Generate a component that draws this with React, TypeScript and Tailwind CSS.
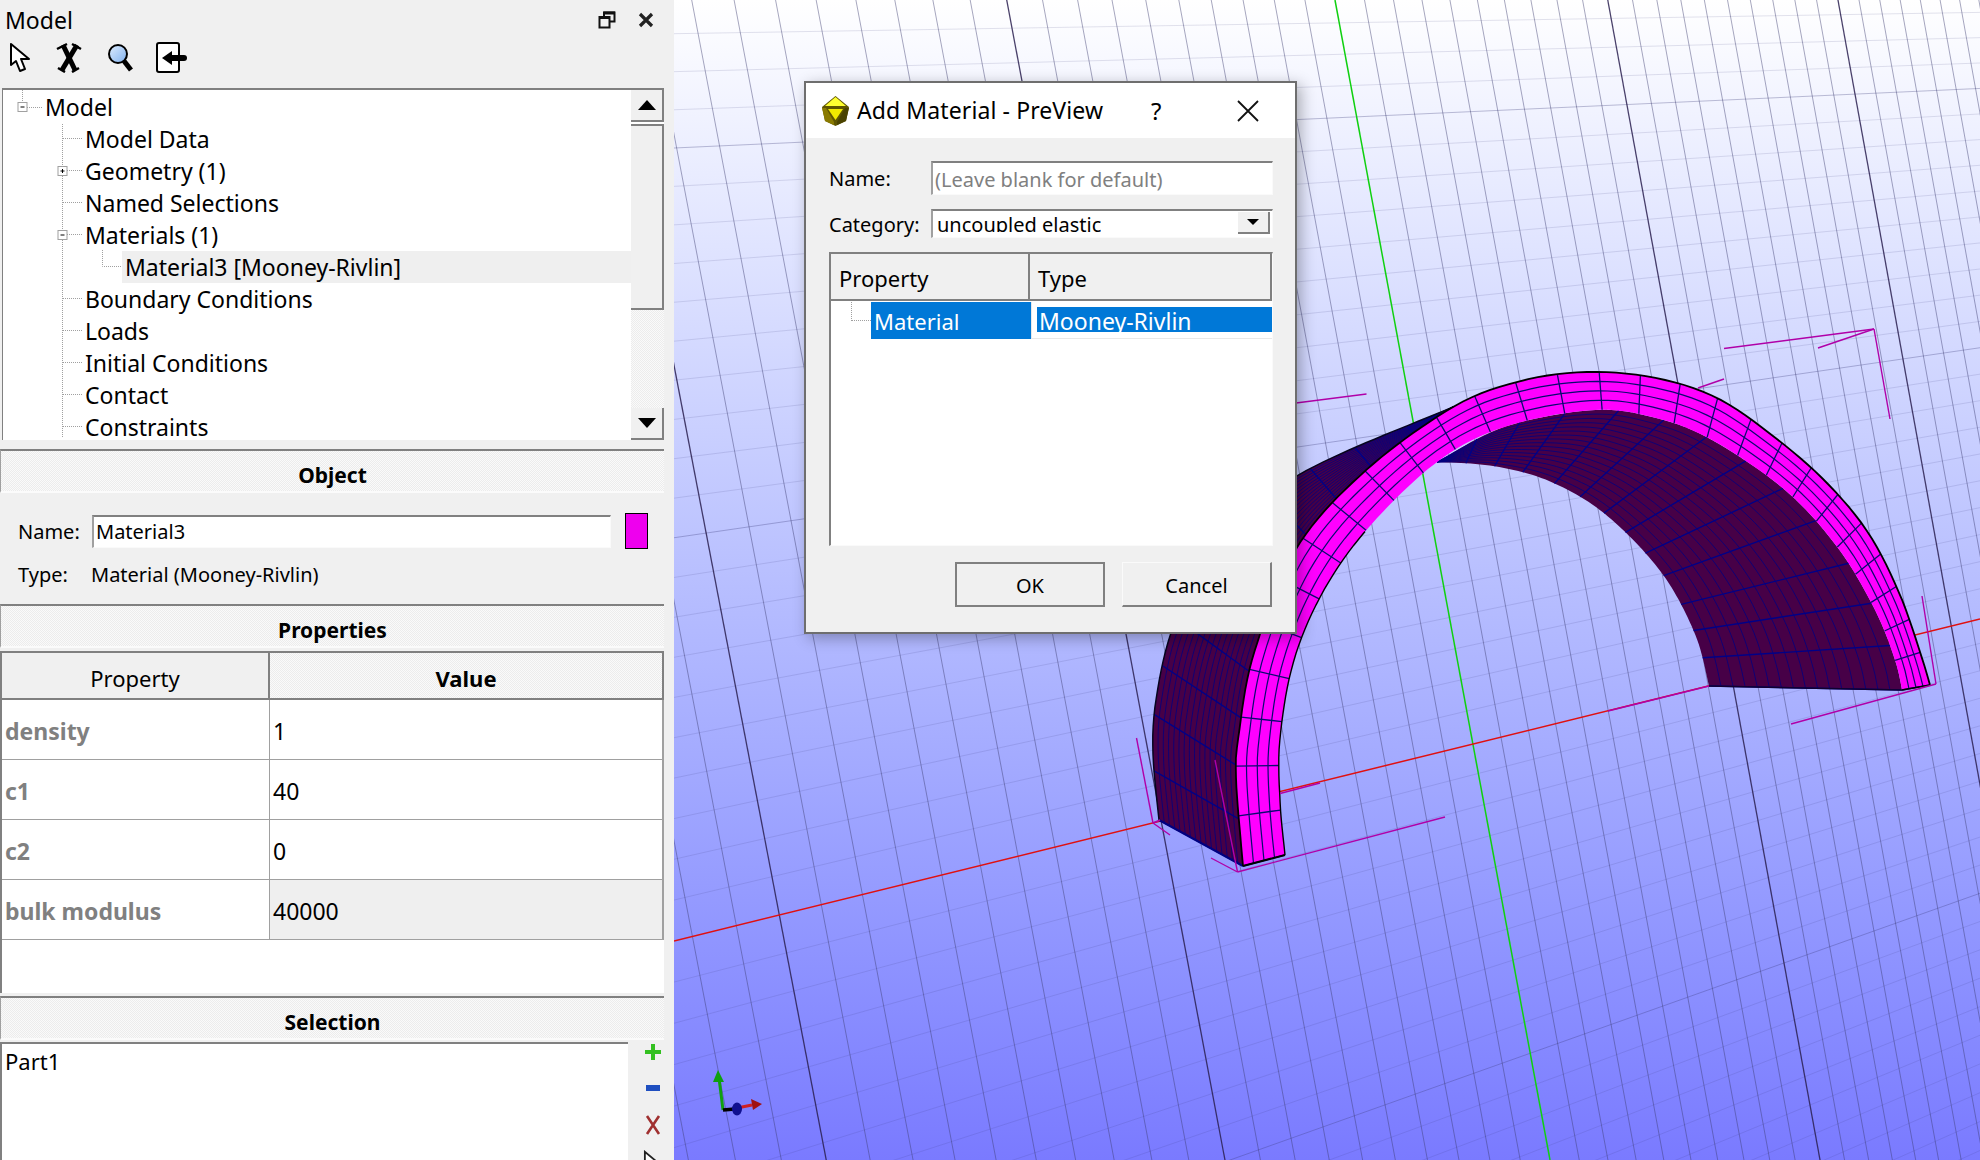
import React from "react";

type P = [number, number];

function resample(pts: P[], n: number, warp = 0): P[] {
  const dense: P[] = [];
  const g = (i: number) => pts[Math.max(0, Math.min(pts.length - 1, i))];
  for (let i = 0; i < pts.length - 1; i++) {
    const [p0, p1, p2, p3] = [g(i - 1), g(i), g(i + 1), g(i + 2)];
    for (let k = 0; k < 20; k++) {
      const t = k / 20, t2 = t * t, t3 = t2 * t;
      const f = (a: number, b: number, c: number, d: number) =>
        0.5 * (2 * b + (c - a) * t + (2 * a - 5 * b + 4 * c - d) * t2 + (3 * b - a - 3 * c + d) * t3);
      dense.push([f(p0[0], p1[0], p2[0], p3[0]), f(p0[1], p1[1], p2[1], p3[1])]);
    }
  }
  dense.push(pts[pts.length - 1]);
  const L = [0];
  for (let i = 1; i < dense.length; i++) L.push(L[i - 1] + Math.hypot(dense[i][0] - dense[i - 1][0], dense[i][1] - dense[i - 1][1]));
  const out: P[] = [];
  let j = 0;
  for (let i = 0; i <= n; i++) {
    const t = i / n;
    const s = ((1 + warp) * t - warp * t * t) * L[L.length - 1];
    while (j < L.length - 2 && L[j + 1] < s) j++;
    const r = (s - L[j]) / Math.max(1e-6, L[j + 1] - L[j]);
    out.push([dense[j][0] + (dense[j + 1][0] - dense[j][0]) * r, dense[j][1] + (dense[j + 1][1] - dense[j][1]) * r]);
  }
  return out;
}
const lerp = (a: P, b: P, t: number): P => [a[0] + (b[0] - a[0]) * t, a[1] + (b[1] - a[1]) * t];
const pth = (p: P[], close = false) => "M" + p.map((q) => q[0].toFixed(1) + " " + q[1].toFixed(1)).join("L") + (close ? "Z" : "");

const outerPts: P[] = [[1243, 866], [1236, 778], [1239, 733], [1254, 653], [1296, 549], [1364, 472], [1453, 407], [1521, 381], [1588, 372], [1656, 378], [1717, 398], [1773, 436], [1826, 482], [1869, 534], [1900, 595], [1921, 655], [1930, 685]];
const innerPts: P[] = [[1285, 855], [1280, 801], [1280, 738], [1294, 660], [1324, 590], [1369, 527], [1437, 462], [1504, 427], [1594, 410], [1656, 418], [1712, 440], [1785, 490], [1838, 548], [1875, 610], [1895, 660], [1902, 690]];
const innerBack: P[] = [[1437, 462], [1493, 466], [1549, 481], [1605, 514], [1661, 572], [1695, 634], [1709, 686]];
const outerBack: P[] = [[1159, 820], [1153, 753], [1156, 700], [1172, 630], [1205, 565], [1290, 480], [1453, 407]];

function Scene() {
  const steep: React.ReactNode[] = [];
  for (let u = -26; u <= 30; u++) {
    const d = (29.5 * u) / (1 + 0.00924 * u);
    const major = u % 10 === 0;
    if (u === 0) continue;
    steep.push(
      <line key={u} x1={1335 + d * 1.01} y1={0} x2={1550 + d} y2={1160} stroke={major ? "#2a2050" : "#3c3c6e"} strokeOpacity={major ? 0.85 : 0.45} strokeWidth={major ? 1.3 : 1} />
    );
  }
  const shallow: React.ReactNode[] = [];
  const VP: P = [4576, -30];
  for (let v = -24; v <= 22; v++) {
    if (v === 0) continue;
    const yL = 941 + 41 * v + 0.0675 * v * v;
    const k = (4576 - 1980) / (4576 - 674);
    const yR = VP[1] + (yL - VP[1]) * k;
    const major = v % 10 === 0;
    shallow.push(<line key={v} x1={674} y1={yL} x2={1980} y2={yR} stroke="#3c3c78" strokeOpacity={major ? 0.32 : 0.14} strokeWidth={1} />);
  }

  const N = 28;
  const O = resample(outerPts, N, 0.2);
  const I = resample(innerPts, N, 0.2);
  const ringFine = [...resample(outerPts, 120), ...resample(innerPts, 120).reverse()];
  const ringMesh: React.ReactNode[] = [];
  for (let i = 0; i <= N; i++) ringMesh.push(<line key={"r" + i} x1={O[i][0]} y1={O[i][1]} x2={I[i][0]} y2={I[i][1]} stroke="#0a0a70" strokeWidth={1.3} />);
  const of = resample(outerPts, 120);
  const inf = resample(innerPts, 120);
  [0.25, 0.5, 0.75].forEach((t, j) =>
    ringMesh.push(<path key={"c" + j} d={pth(of.map((p, i) => lerp(p, inf[i], t)))} fill="none" stroke="#0a0a70" strokeWidth={1.2} />)
  );

  const surf = (front: P[], back: P[], cross: number, longs: number, key: string) => {
    const f = resample(front, 80), b = resample(back, 80);
    const out: React.ReactNode[] = [<path key={key + "f"} d={pth([...f, ...[...b].reverse()], true)} fill="#470047" />];
    for (let i = 1; i < longs; i++) {
      out.push(<path key={key + "l" + i} d={pth(f.map((p, q) => lerp(p, b[q], i / longs)))} fill="none" stroke="#000080" strokeWidth={0.8} />);
    }
    for (let i = 0; i <= cross; i++) {
      const q = Math.round((i / cross) * 80);
      out.push(<line key={key + "x" + i} x1={f[q][0]} y1={f[q][1]} x2={b[q][0]} y2={b[q][1]} stroke="#000088" strokeWidth={1.4} />);
    }
    return out;
  };

  const leftFront = [...outerPts.slice(0, 7)];
  const rightFront = [...innerPts.slice(6)];
  const bbox: [number, number, number, number][] = [
    [1237.5, 872, 1445, 817], [1237.5, 872, 1211, 858], [1237.5, 872, 1215, 760],
    [1153, 823, 1136.5, 738], [1153, 823, 1170, 835], [1153, 823, 1160, 820],
    [1936, 684, 1791, 724], [1936, 684, 1922, 596], [1608, 711, 1709, 686], [1280, 793.5, 1320, 783],
    [1874, 329, 1724, 348.5], [1874, 329, 1818, 348], [1874, 329, 1890, 419], [1698, 388, 1724, 379], [1296, 403, 1366.5, 394],
  ];

  return (
    <svg className="absolute inset-0 h-full w-full" viewBox="674 0 1306 1160">
      {shallow}
      {steep}
      <line x1={1335} y1={0} x2={1550} y2={1160} stroke="#10d010" strokeWidth={1.5} />
      <line x1={674} y1={941} x2={1980} y2={619} stroke="#e01010" strokeWidth={1.5} />
      {surf(leftFront, outerBack, 11, 16, "a")}
      <path d={pth(resample(outerBack, 60))} fill="none" stroke="#050520" strokeWidth={1.5} />
      <line x1={1159} y1={820} x2={1243} y2={866} stroke="#000080" strokeWidth={2} />
      {surf(rightFront, innerBack, 13, 16, "b")}
      <line x1={1709} y1={686} x2={1902} y2={690} stroke="#100030" strokeWidth={1.5} />
      <path d={pth(ringFine, true)} fill="#ff00ff" />
      {ringMesh}
      <path d={pth(of)} fill="none" stroke="#000" strokeWidth={1.8} />
      <path d={pth(inf.slice(0, 40))} fill="none" stroke="#000" strokeWidth={1.4} />
      <line x1={1243} y1={866} x2={1285} y2={855} stroke="#000" strokeWidth={2} />
      <line x1={1902} y1={690} x2={1930} y2={685} stroke="#000" strokeWidth={1.5} />
      {bbox.map((b, i) => (
        <line key={i} x1={b[0]} y1={b[1]} x2={b[2]} y2={b[3]} stroke="#b000a8" strokeWidth={1.4} />
      ))}
      <line x1={723} y1={1110} x2={719} y2={1078} stroke="#10a010" strokeWidth={3} />
      <polygon points="718,1070 713,1082 724,1082" fill="#10a010" />
      <line x1={737} y1={1108} x2={752} y2={1105} stroke="#d02020" strokeWidth={3} />
      <polygon points="762,1104 751,1099 753,1110" fill="#a01010" />
      <line x1={723} y1={1110} x2={735} y2={1109} stroke="#000" strokeWidth={3.5} />
      <ellipse cx={737} cy={1109} rx={5} ry={6.5} fill="#101090" />
    </svg>
  );
}

const Cursor = ({ w = 22, h = 31 }: { w?: number; h?: number }) => (
  <svg width={w} height={h} viewBox="0 0 22 31">
    <path d="M2 2 L2 23 L7 19 L11 29 L16 27 L12 17 L20 17 Z" fill="#fff" stroke="#000" strokeWidth="2" strokeLinejoin="round" />
  </svg>
);

const ModelToolbar = () => (
  <div className="flex h-[48px] items-start pl-[9px] pt-[2px]">
    <Cursor />
    <svg className="ml-[25px]" width="26" height="31" viewBox="0 0 26 31">
      <path d="M7 3 L19 28" fill="none" stroke="#000" strokeWidth="5" />
      <path d="M21 3 L6 28" fill="none" stroke="#000" strokeWidth="5" />
      <path d="M1 7 L11 2 M16 2 L25 7 M2 26 L9 30 M16 30 L23 26" stroke="#000" strokeWidth="2.5" />
    </svg>
    <svg className="ml-[25px]" width="26" height="31" viewBox="0 0 26 31">
      <defs>
        <linearGradient id="mag" x1="0" y1="0" x2="1" y2="1">
          <stop offset="0" stopColor="#e0eeff" />
          <stop offset="1" stopColor="#7fb0ee" />
        </linearGradient>
      </defs>
      <circle cx="11" cy="12" r="9" fill="url(#mag)" stroke="#000" strokeWidth="2" />
      <line x1="17" y1="19" x2="24" y2="28" stroke="#000" strokeWidth="5" />
    </svg>
    <svg className="ml-[23px]" width="32" height="31" viewBox="0 0 32 31">
      <rect x="1" y="1" width="22" height="29" rx="2" fill="#fff" stroke="#000" strokeWidth="2" />
      <line x1="14" y1="16" x2="28" y2="16" stroke="#000" strokeWidth="6" strokeLinecap="round" />
      <polygon points="6,16 16,9 16,23" fill="#000" />
    </svg>
  </div>
);

const treeRows: { label: string; level: number; selected?: boolean }[] = [
  { label: "Model", level: 0 },
  { label: "Model Data", level: 1 },
  { label: "Geometry (1)", level: 1 },
  { label: "Named Selections", level: 1 },
  { label: "Materials (1)", level: 1 },
  { label: "Material3 [Mooney-Rivlin]", level: 2, selected: true },
  { label: "Boundary Conditions", level: 1 },
  { label: "Loads", level: 1 },
  { label: "Initial Conditions", level: 1 },
  { label: "Contact", level: 1 },
  { label: "Constraints", level: 1 },
];

const TreeLines = () => {
  const box = (x: number, y: number, plus: boolean) => (
    <g key={x + "-" + y}>
      <rect x={x - 4.5} y={y - 4.5} width="9" height="9" fill="#fff" stroke="#a0a0a0" />
      <line x1={x - 2} y1={y} x2={x + 2} y2={y} stroke="#000" />
      {plus && <line x1={x} y1={y - 2} x2={x} y2={y + 2} stroke="#000" />}
    </g>
  );
  const ys = [139, 171, 203, 235, 299, 331, 363, 395, 427];
  return (
    <svg className="absolute left-0 top-0 z-10" width="130" height="350" viewBox="3 90 130 350">
      <g stroke="#a0a0a0" strokeDasharray="1 1" fill="none">
        <path d="M22.5 90 V103 M27 107.5 H42 M62.5 124 V438" />
        {ys.map((y) => (
          <path key={y} d={`M63 ${y - 0.5} H82`} />
        ))}
        <path d="M102.5 250 V266.5 H122" />
      </g>
      {box(22.5, 107, false)}
      {box(62.5, 171, true)}
      {box(62.5, 235, false)}
    </svg>
  );
};

const dither = "bg-[repeating-conic-gradient(#ececec_0_25%,#fafafa_0_50%)] bg-[length:2px_2px]";

const SectionHeader = ({ title }: { title: string }) => (
  <div className={`flex h-[44px] shrink-0 items-center justify-center border-b-2 border-l border-t-2 border-b-[#fbfbfb] border-l-[#a0a0a0] border-t-[#808080] pt-[9px] ${dither} text-[21px] font-bold`}>{title}</div>
);

const ScrollBtn = ({ up }: { up?: boolean }) => (
  <div className="flex h-[32px] items-center justify-center border-b-2 border-r-2 border-[#808080] bg-[#f0f0f0]">
    <svg width="18" height="10" viewBox="0 0 18 10">
      <polygon points={up ? "0,10 18,10 9,0" : "0,0 18,0 9,10"} fill="#000" />
    </svg>
  </div>
);

const props = [
  { k: "density", v: "1" },
  { k: "c1", v: "40" },
  { k: "c2", v: "0" },
  { k: "bulk modulus", v: "40000", sel: true },
];

function LeftPanel() {
  return (
    <div className="flex h-[1160px] w-[674px] shrink-0 flex-col overflow-hidden bg-[#f0f0f0] pr-[10px] text-[22px] text-black">
      <div className="flex h-[40px] shrink-0 items-center justify-between pl-[5px] pr-[10px] text-[23px]">
        <span>Model</span>
        <div className="flex items-center gap-[22px]">
          <svg width="18" height="18" viewBox="0 0 18 18">
            <rect x="6" y="1.5" width="10.5" height="9" fill="none" stroke="#111" strokeWidth="2" />
            <rect x="1.5" y="6" width="10" height="10.5" fill="#f0f0f0" stroke="#111" strokeWidth="2" />
            <rect x="1" y="5" width="11" height="3" fill="#111" />
            <rect x="5.5" y="0.5" width="11.5" height="3" fill="#111" />
          </svg>
          <svg width="16" height="16" viewBox="0 0 16 16">
            <path d="M2 2 L14 14 M14 2 L2 14" stroke="#222" strokeWidth="3.2" />
          </svg>
        </div>
      </div>
      <ModelToolbar />
      <div className="relative ml-[2px] flex h-[352px] shrink-0 border-l border-t-2 border-l-[#808080] border-t-[#808080] bg-white">
        <TreeLines />
        <div className="flex-1 overflow-hidden pt-px text-[23px] leading-[26px]">
          {treeRows.map((r) => (
            <div key={r.label} className={`relative flex h-[32px] items-center ${r.level === 0 ? "pl-[42px]" : r.level === 1 ? "pl-[82px]" : "pl-[122px]"}`}>
              {r.selected && <span className="absolute inset-y-0 left-[119px] right-0 bg-[#efefef]" />}
              <span className="relative">{r.label}</span>
            </div>
          ))}
        </div>
        <div className="flex w-[33px] shrink-0 flex-col">
          <ScrollBtn up />
          <div className="mt-[2px] h-[186px] border-b-2 border-r-2 border-t-2 border-[#808080] bg-[#f0f0f0]" />
          <div className={`flex-1 ${dither}`} />
          <ScrollBtn />
        </div>
      </div>
      <div className="h-[9px] shrink-0" />
      <SectionHeader title="Object" />
      <div className="flex h-[111px] shrink-0 flex-col pl-[18px] pr-[16px] pt-[20px] text-[20px]">
        <div className="flex h-[36px] items-center">
          <span className="w-[74px] pt-px">Name:</span>
          <div className="flex h-[33px] w-[519px] items-center border-b border-l-2 border-r border-t-2 border-b-[#fafafa] border-l-[#a0a0a0] border-r-[#fafafa] border-t-[#808080] bg-white pl-[2px] pt-px">Material3</div>
          <div className="ml-[14px] h-[36px] w-[23px] border border-black bg-[#ee00ee]" />
        </div>
        <div className="mt-[10px] flex h-[32px] items-center">
          <span className="w-[73px]">Type:</span>
          <span>Material (Mooney-Rivlin)</span>
        </div>
      </div>
      <SectionHeader title="Properties" />
      <div className="mt-[3px] flex h-[342px] shrink-0 flex-col border-l-2 border-[#808080] bg-white">
        <div className="flex h-[49px] shrink-0 border-b-2 border-r-2 border-t-2 border-[#808080]">
          <div className="flex w-[268px] items-center justify-center border-r-2 border-[#808080] bg-[#f0f0f0] pt-[5px]">Property</div>
          <div className={`flex flex-1 items-center justify-center pt-[5px] font-bold ${dither}`}>Value</div>
        </div>
        {props.map((p) => (
          <div key={p.k} className="flex h-[60px] shrink-0 border-b border-r-2 border-[#a0a0a0] text-[23px]">
            <div className="flex w-[268px] items-center border-r border-[#a0a0a0] pl-[3px] pt-[3px] font-bold text-[#808080]">{p.k}</div>
            <div className={`flex flex-1 items-center pl-[3px] pt-[3px] ${p.sel ? "bg-[#efefef]" : ""}`}>{p.v}</div>
          </div>
        ))}
      </div>
      <div className="h-[3px] shrink-0" />
      <SectionHeader title="Selection" />
      <div className="mt-[2px] flex min-h-0 flex-1">
        <div className="flex-1 border-l-2 border-t-2 border-[#808080] bg-white pl-[3px] pt-px">Part1</div>
        <div className="flex w-[36px] shrink-0 flex-col items-center overflow-hidden pl-[14px] pt-[1px]">
          <svg className="shrink-0" width="18" height="18" viewBox="0 0 18 18">
            <path d="M9 1 V17 M1 9 H17" stroke="#33c020" strokeWidth="4" />
          </svg>
          <svg className="mt-[24px] shrink-0" width="14" height="6" viewBox="0 0 14 6">
            <rect width="14" height="6" fill="#1f4fc0" />
          </svg>
          <svg className="mt-[24px] shrink-0" width="16" height="20" viewBox="0 0 16 20">
            <path d="M2 1 L14 19 M14 1 L2 19" stroke="#a03030" strokeWidth="2.6" />
          </svg>
          <svg className="mt-[15px] shrink-0" width="20" height="28" viewBox="0 0 22 31">
            <path d="M2 2 L2 23 L7 19 L11 29 L16 27 L12 17 L20 17 Z" fill="#fff" stroke="#222" strokeWidth="2" />
          </svg>
        </div>
      </div>
    </div>
  );
}

function Dialog() {
  return (
    <div className="absolute left-[130px] top-[81px] flex h-[553px] w-[493px] flex-col border-2 border-[#6e6e6e] bg-[#f0f0f0] text-[22px] text-black shadow-[4px_4px_14px_rgba(0,0,0,0.3)]">
      <div className="relative flex h-[55px] shrink-0 items-center bg-white pl-[15px]">
        <svg width="29" height="30" viewBox="0 0 29 30">
          <polygon points="14.5,0 28,11 25,25 14.5,30 4,25 1,11" fill="#5f5500" />
          <polygon points="14.5,1 25,10 4,10" fill="#ffff30" />
          <polygon points="7,13 22,13 14.5,24" fill="#f0e800" />
          <polygon points="1,12 5,12 13,26 13,29 4,25" fill="#8a7a00" />
          <polygon points="28,12 24,12 16,26 16,29 25,25" fill="#4a4200" />
        </svg>
        <span className="ml-[7px] text-[23px] tracking-[0.1px]">Add Material - PreView</span>
        <span className="ml-[48px] text-[24px]">?</span>
        <svg className="ml-[75px]" width="22" height="22" viewBox="0 0 22 22">
          <path d="M1 1 L21 21 M21 1 L1 21" stroke="#111" strokeWidth="1.8" />
        </svg>
      </div>
      <div className="flex flex-1 flex-col pl-[23px] pr-[22px] pt-[23px]">
        <div className="flex h-[34px] items-center text-[20px]">
          <span className="w-[102px] shrink-0 pt-[2px]">Name:</span>
          <div className="flex h-[34px] flex-1 items-center border-b border-l-2 border-r border-t-2 border-b-[#fafafa] border-l-[#a0a0a0] border-r-[#fafafa] border-t-[#808080] bg-white pl-[2px] pt-[2px] text-[#808080]">(Leave blank for default)</div>
        </div>
        <div className="mt-[14px] flex h-[29px] items-center text-[20px]">
          <span className="w-[102px] shrink-0 pt-[2px]">Category:</span>
          <div className="flex h-[29px] flex-1 items-start justify-between border-b border-l-2 border-r border-t-2 border-b-[#fafafa] border-l-[#a0a0a0] border-r-[#fafafa] border-t-[#808080] bg-white pl-[4px]">
            <div className="h-[21px] overflow-hidden leading-[27px]">uncoupled elastic</div>
            <div className="mr-[2px] mt-[1px] flex h-[22px] w-[32px] items-center justify-center border-b-2 border-r-2 border-[#808080] bg-[#f0f0f0]">
              <svg width="12" height="6" viewBox="0 0 12 6">
                <polygon points="0,0 12,0 6,6" fill="#000" />
              </svg>
            </div>
          </div>
        </div>
        <div className="relative mt-[14px] flex h-[294px] flex-col border-b border-l-2 border-r border-t-2 border-b-[#fafafa] border-l-[#808080] border-r-[#fafafa] border-t-[#808080] bg-white">
          <div className="flex h-[47px] shrink-0 border-b-2 border-[#808080]">
            <div className="flex w-[199px] items-center border-r-2 border-[#808080] bg-[#f0f0f0] pl-[8px] pt-[4px]">Property</div>
            <div className="flex flex-1 items-center border-r-2 border-[#808080] bg-[#f0f0f0] pl-[8px] pt-[4px]">Type</div>
          </div>
          <div className="mt-px flex h-[37px] shrink-0">
            <div className="relative w-[200px] pl-[40px]">
              <span className="absolute left-[20px] top-0 h-[19px] w-[20px] border-b border-l border-dotted border-[#a0a0a0]" />
              <div className="flex h-[37px] items-center bg-[#0078d7] pl-[3px] pt-[2px] text-white">Material</div>
            </div>
            <div className="flex-1 border-b border-l border-[#e8e8e8] pl-[5px] pt-[5px]">
              <div className="h-[25px] overflow-hidden bg-[#0078d7] pl-[2px] text-[23px] leading-[28px] text-white">Mooney-Rivlin</div>
            </div>
          </div>
        </div>
        <div className="mt-[16px] flex justify-end gap-[17px] pr-px text-[20px]">
          <div className="flex h-[45px] w-[150px] items-center justify-center border-2 border-[#808080] bg-[#f0f0f0] pt-[3px]">OK</div>
          <div className="flex h-[45px] w-[150px] items-center justify-center border-b-2 border-l border-r-2 border-t border-b-[#808080] border-l-[#fafafa] border-r-[#808080] border-t-[#fafafa] bg-[#f0f0f0] pt-[3px]">Cancel</div>
        </div>
      </div>
    </div>
  );
}

export default function App() {
  return (
    <div className="flex h-[1160px] w-[1980px] overflow-hidden font-['Noto_Sans',sans-serif]">
      <LeftPanel />
      <div className="relative flex-1 overflow-hidden bg-gradient-to-b from-white to-[#7a7aff]">
        <Scene />
        <Dialog />
      </div>
    </div>
  );
}
